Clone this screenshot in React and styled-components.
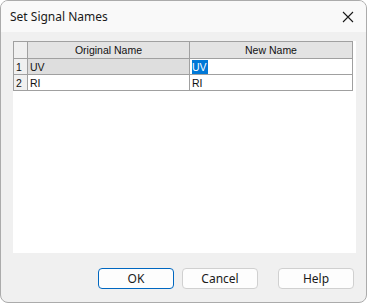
import React from "react";
import styled, { createGlobalStyle } from "styled-components";

const Global = createGlobalStyle`
  html, body { margin: 0; padding: 0; background: #ffffff; }
  body { font-family: "Noto Sans", "Liberation Sans", sans-serif; }
`;

const Window = styled.div`
  box-sizing: border-box;
  width: 367px;
  height: 303px;
  border: 1px solid #ababab;
  border-radius: 8px;
  overflow: hidden;
  background: #f0f0f0;
  display: flex;
  flex-direction: column;
`;

const TitleBar = styled.div`
  height: 31px;
  flex: none;
  background: #f9f9f9;
  display: flex;
  align-items: center;
  justify-content: space-between;
  padding: 0 10px 0 9px;
`;

const Title = styled.div`
  font-family: "Noto Sans", sans-serif;
  font-size: 12px;
  color: #1a1a1a;
  margin-top: -1px;
`;

const CloseButton = styled.div`
  width: 12px;
  height: 12px;
  display: flex;
  align-items: center;
  justify-content: center;
  margin-right: 2px;
`;

const Body = styled.div`
  flex: 1;
  display: flex;
  flex-direction: column;
  padding: 9px 10px 0 12px;
`;

const GridArea = styled.div`
  height: 212px;
  background: #ffffff;
  flex: none;
`;

const Grid = styled.div`
  display: grid;
  grid-template-columns: 14px 162px 163px;
  border-top: 1px solid #a0a0a0;
  border-left: 1px solid #a0a0a0;
  width: max-content;
  font-family: "Liberation Sans", Arial, sans-serif;
  font-size: 10.5px;
  color: #111;
`;

const Cell = styled.div`
  box-sizing: border-box;
  height: ${(p) => (p.$header ? 17 : 16)}px;
  border-right: 1px solid #a0a0a0;
  border-bottom: 1px solid #a0a0a0;
  background: ${(p) => p.$bg || "#ffffff"};
  display: flex;
  align-items: center;
  justify-content: ${(p) => (p.$center ? "center" : "flex-start")};
  padding-left: ${(p) => (p.$center ? 0 : 2)}px;
  white-space: nowrap;
  overflow: hidden;
`;

const Selected = styled.span`
  background: #0078d7;
  color: #ffffff;
  padding: 0 1px 0 0;
  line-height: 14px;
`;

const ButtonRow = styled.div`
  display: flex;
  padding-top: 15px;
  padding-left: 85px;
  gap: 8px;
`;

const Button = styled.div`
  box-sizing: border-box;
  width: 76px;
  height: 21px;
  border: 1px solid ${(p) => (p.$primary ? "#0067c0" : "#d0d0d0")};
  border-radius: 4px;
  background: #fdfdfd;
  display: flex;
  align-items: center;
  justify-content: center;
  font-family: "Noto Sans", sans-serif;
  font-size: 12px;
  color: #1a1a1a;
  margin-left: ${(p) => p.$push || 0}px;
`;

export default function App() {
  return (
    <>
      <Global />
      <Window>
        <TitleBar>
          <Title>Set Signal Names</Title>
          <CloseButton>
            <svg width="12" height="12" viewBox="0 0 12 12">
              <path d="M1 1 L11 11 M11 1 L1 11" stroke="#1a1a1a" strokeWidth="1.1" fill="none" />
            </svg>
          </CloseButton>
        </TitleBar>
        <Body>
          <GridArea>
            <Grid>
              <Cell $header $bg="#f0f0f0" />
              <Cell $header $center $bg="#e3e3e3">Original Name</Cell>
              <Cell $header $center $bg="#e3e3e3">New Name</Cell>
              <Cell $bg="#f0f0f0">1</Cell>
              <Cell $bg="#dedede">UV</Cell>
              <Cell><Selected>UV</Selected></Cell>
              <Cell $bg="#f0f0f0">2</Cell>
              <Cell>RI</Cell>
              <Cell>RI</Cell>
            </Grid>
          </GridArea>
          <ButtonRow>
            <Button $primary>OK</Button>
            <Button>Cancel</Button>
            <Button $push={12}>Help</Button>
          </ButtonRow>
        </Body>
      </Window>
    </>
  );
}
